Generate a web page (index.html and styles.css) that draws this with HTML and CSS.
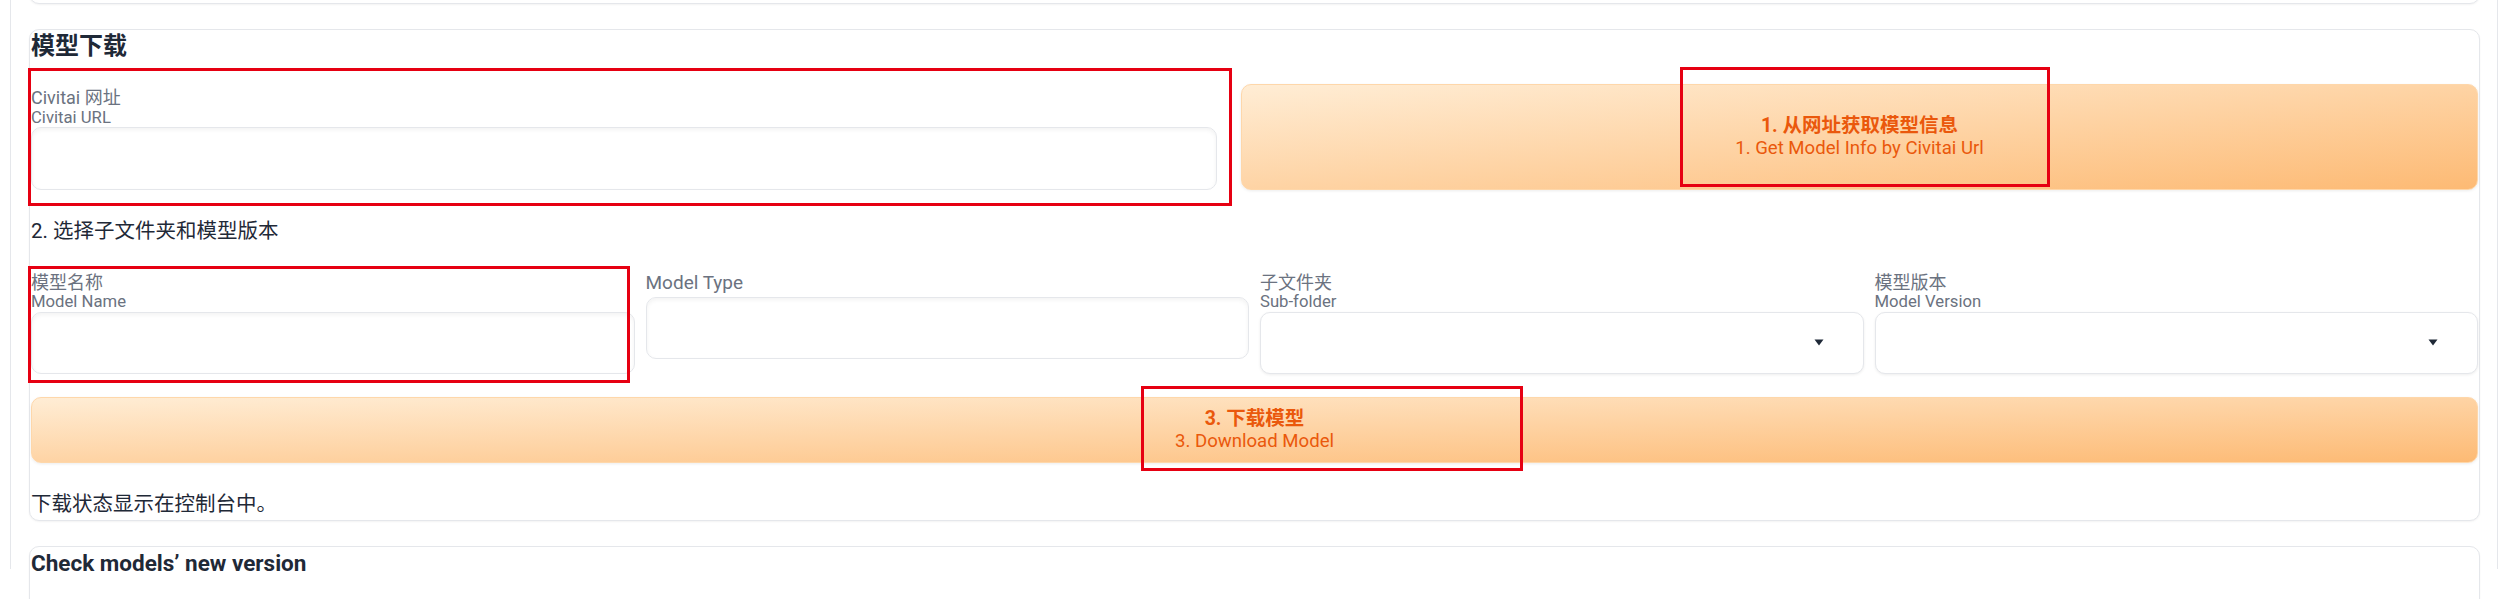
FILE: index.html
```html
<!DOCTYPE html>
<html lang="zh">
<head>
<meta charset="utf-8">
<title>模型下载</title>
<link rel="stylesheet" href="styles.css">
</head>
<body>
<div class="panel">
  <div class="card card-prev"></div>

  <section class="card card-download">
    <h3 class="card-title">模型下载</h3>

    <div class="row-url">
      <div class="field">
        <label class="field-label"><span class="lbl-cn">Civitai 网址</span><span class="lbl-en">Civitai URL</span></label>
        <div class="textbox textbox-url"></div>
      </div>
      <button class="btn-primary btn-get"><span class="btn-cn">1. 从网址获取模型信息</span><span class="btn-en">1. Get Model Info by Civitai Url</span></button>
    </div>

    <p class="step-text">2. 选择子文件夹和模型版本</p>

    <div class="row-fields">
      <div class="field">
        <label class="field-label"><span class="lbl-cn">模型名称</span><span class="lbl-en">Model Name</span></label>
        <div class="textbox"></div>
      </div>
      <div class="field">
        <label class="field-label one-line"><span class="lbl-single">Model Type</span></label>
        <div class="textbox"></div>
      </div>
      <div class="field">
        <label class="field-label"><span class="lbl-cn">子文件夹</span><span class="lbl-en">Sub-folder</span></label>
        <div class="dropdown"><svg class="arrow" width="10" height="7" viewBox="0 0 10 7"><path d="M0.5 0.5 H9.5 L5 6.5 Z" fill="#1f2937"/></svg></div>
      </div>
      <div class="field">
        <label class="field-label"><span class="lbl-cn">模型版本</span><span class="lbl-en">Model Version</span></label>
        <div class="dropdown"><svg class="arrow" width="10" height="7" viewBox="0 0 10 7"><path d="M0.5 0.5 H9.5 L5 6.5 Z" fill="#1f2937"/></svg></div>
      </div>
    </div>

    <button class="btn-primary btn-download"><span class="btn-cn">3. 下载模型</span><span class="btn-en">3. Download Model</span></button>

    <p class="status-text">下载状态显示在控制台中。</p>
  </section>

  <section class="card card-check">
    <h3 class="card-title card-title-en">Check models’ new version</h3>
  </section>
</div>

<div class="annot annot-url"></div>
<div class="annot annot-get"></div>
<div class="annot annot-name"></div>
<div class="annot annot-download"></div>
</body>
</html>
```

FILE: styles.css
```css
html, body {
  margin: 0;
  padding: 0;
  background: #ffffff;
  height: 100%;
  overflow: hidden;
}

body {
  position: relative;
  font-family: "Roboto", "Noto Sans CJK SC", sans-serif;
  color: #1f2937;
}

.panel {
  box-sizing: border-box;
  margin-left: 10px;
  width: 2488px;
  height: 599px;
  border-left: 1px solid #e5e7eb;
  border-right: 1px solid #e5e7eb;
  padding: 0 17px 0 18px;
}

.card {
  box-sizing: border-box;
  border: 1px solid #e5e7eb;
  border-radius: 10px;
  background: #ffffff;
  box-shadow: 0 1px 2px rgba(0, 0, 0, 0.05);
}

.card-prev {
  margin-top: -30px;
  height: 34px;
}

.card-download {
  margin-top: 25px;
  padding: 0 1px 1px;
}

.card-check {
  margin-top: 25px;
  height: 80px;
  padding: 0 1px;
}

.card-title {
  margin: 0;
  font-size: 24px;
  font-weight: 700;
  line-height: 32px;
  color: #1f2937;
}

.card-title-en {
  font-size: 22.5px;
}

/* row 1 */
.row-url {
  margin-top: 22px;
  display: grid;
  grid-template-columns: 1186px 1fr;
  column-gap: 24px;
  align-items: end;
}

.field {
  display: flex;
  flex-direction: column;
}

.field-label {
  display: flex;
  flex-direction: column;
  color: #6b7280;
  line-height: 19.5px;
}

.lbl-cn {
  font-size: 18px;
}

.lbl-en {
  font-size: 16.7px;
}

.field-label.one-line {
  line-height: 20.5px;
  margin-bottom: 4px;
}

.lbl-single {
  font-size: 19px;
}

.textbox {
  box-sizing: border-box;
  height: 62px;
  border: 1px solid #e5e7eb;
  border-radius: 10px;
  background: #ffffff;
  box-shadow: inset 0 2px 4px rgba(0, 0, 0, 0.05);
}

.textbox-url {
  height: 63px;
}

.dropdown {
  box-sizing: border-box;
  height: 62px;
  border: 1px solid #e5e7eb;
  border-radius: 10px;
  background: #ffffff;
  box-shadow: 0 1px 3px rgba(0, 0, 0, 0.07);
  display: flex;
  align-items: center;
  justify-content: flex-end;
  padding-right: 39px;
}

.arrow {
  display: block;
}

/* buttons */
.btn-primary {
  box-sizing: border-box;
  display: flex;
  flex-direction: column;
  align-items: center;
  justify-content: center;
  width: 100%;
  margin: 0;
  padding: 0;
  border: 1px solid #fed7aa;
  border-radius: 10px;
  background: linear-gradient(to bottom right, #ffedd5, #fdba74);
  box-shadow: 0 1px 3px rgba(0, 0, 0, 0.08);
  color: #ea580c;
  font-family: "Roboto", "Noto Sans CJK SC", sans-serif;
  cursor: pointer;
}

.btn-get {
  height: 106px;
}

.btn-download {
  margin-top: 23.5px;
  height: 66px;
}

.btn-cn {
  font-size: 19.5px;
  font-weight: 700;
  line-height: 22px;
}

.btn-en {
  font-size: 18.6px;
  font-weight: 400;
  line-height: 22px;
}

/* text */
.step-text {
  margin: 25.5px 0 0;
  font-size: 20.5px;
  line-height: 30px;
  color: #1f2937;
}

.row-fields {
  margin-top: 27px;
  display: grid;
  grid-template-columns: repeat(4, 1fr);
  column-gap: 11px;
  align-items: start;
}

.status-text {
  margin: 25.5px 0 0;
  font-size: 20.5px;
  line-height: 30px;
  color: #1f2937;
}

/* red annotation overlays */
.annot {
  position: absolute;
  box-sizing: border-box;
  border: 3px solid #e60012;
  pointer-events: none;
}

.annot-url {
  left: 28px;
  top: 68px;
  width: 1204px;
  height: 138px;
}

.annot-get {
  left: 1680px;
  top: 67px;
  width: 370px;
  height: 120px;
}

.annot-name {
  left: 28px;
  top: 266px;
  width: 602px;
  height: 117px;
}

.annot-download {
  left: 1141px;
  top: 386px;
  width: 382px;
  height: 85px;
}
```
